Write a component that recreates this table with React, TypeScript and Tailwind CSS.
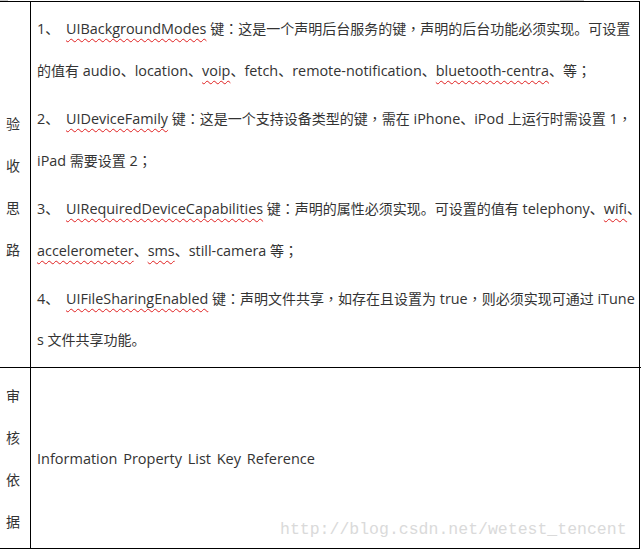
import React from "react";

const CJK = /([\u3000-\u303f\u3400-\u9fff\uff00-\uffef]+)/;

function T({ s }: { s: string }) {
  const parts = s.split(CJK).filter((p) => p.length > 0);
  return (
    <>
      {parts.map((p, i) => {
        if (CJK.test(p)) {
          const sub = p.split(/([：，；])/).filter((q) => q.length > 0);
          return (
            <span key={i} className="text-[14px]">
              {sub.map((q, j) =>
                /^[：，；]$/.test(q) ? (
                  <span key={j} style={{ fontFamily: '"Noto Sans CJK TC", sans-serif' }}>
                    {q}
                  </span>
                ) : (
                  <React.Fragment key={j}>{q}</React.Fragment>
                )
              )}
            </span>
          );
        }
        return <React.Fragment key={i}>{p}</React.Fragment>;
      })}
    </>
  );
}

const W = ({ children }: { children: React.ReactNode }) => (
  <span className="underline decoration-wavy decoration-[#e02020] decoration-1 underline-offset-[4px] [text-decoration-skip-ink:none]">
    {children}
  </span>
);

const Num = ({ n }: { n: string }) => (
  <span className="inline-block w-[29px]">
    {n}
    <span className="text-[14px]">、</span>
  </span>
);

const L = ({ children }: { children: React.ReactNode }) => (
  <div className="h-[42px] leading-[42px]">{children}</div>
);

export default function App() {
  const font = { fontFamily: '"Open Sans", "Noto Sans CJK SC", sans-serif' };
  return (
    <div className="w-[641px] h-[550px] bg-white relative overflow-hidden text-[#333]" style={font}>
      <div className="flex h-px">
        <div className="w-[8px] bg-[#c8c8c8]" />
        <div className="ml-[552px] w-[24px] bg-[#c8c8c8]" />
      </div>
      <div className="w-[640px] border-t border-r border-b border-black grid grid-cols-[31px_1fr] grid-rows-[366px_180px]">
        <div className="border-r border-b border-black flex flex-col items-center justify-center text-[14px] leading-[42px] pt-[4px] pr-[4px]">
          <span>验</span>
          <span>收</span>
          <span>思</span>
          <span>路</span>
        </div>
        <div className="border-b border-black pl-[6px] pt-[5px] text-[14.4px] whitespace-nowrap flex flex-col gap-[6px]">
          <div>
            <L>
              <Num n="1" />
              <W>UIBackgroundModes</W> <T s="键：这是一个声明后台服务的键，声明的后台功能必须实现。可设置" />
            </L>
            <L>
              <T s="的值有 audio、location、" />
              <W>voip</W>
              <T s="、fetch、remote-notification、" />
              <W>bluetooth-centra</W>
              <T s="、等；" />
            </L>
          </div>
          <div>
            <L>
              <Num n="2" />
              <W>UIDeviceFamily</W> <T s="键：这是一个支持设备类型的键，需在 iPhone、iPod 上运行时需设置 1，" />
            </L>
            <L>
              <T s="iPad 需要设置 2；" />
            </L>
          </div>
          <div>
            <L>
              <Num n="3" />
              <W>UIRequiredDeviceCapabilities</W> <T s="键：声明的属性必须实现。可设置的值有 telephony、" />
              <W>wifi</W>
              <T s="、" />
            </L>
            <L>
              <W>accelerometer</W>
              <T s="、" />
              <W>sms</W>
              <T s="、still-camera 等；" />
            </L>
          </div>
          <div>
            <L>
              <Num n="4" />
              <W>UIFileSharingEnabled</W> <T s="键：声明文件共享，如存在且设置为 true，则必须实现可通过 iTune" />
            </L>
            <L>
              <T s="s 文件共享功能。" />
            </L>
          </div>
        </div>
        <div className="border-r border-black flex flex-col items-center justify-center text-[14px] leading-[42px] pr-[4px] pt-[2px]">
          <span>审</span>
          <span>核</span>
          <span>依</span>
          <span>据</span>
        </div>
        <div className="flex items-center pl-[6px] text-[14.5px] [word-spacing:2px] pt-[2px]">
          Information Property List Key Reference
        </div>
      </div>
      <div
        className="absolute left-[280px] top-[517px] text-[16.5px] leading-[26px] text-[#dadada] whitespace-nowrap"
        style={{ fontFamily: '"Liberation Mono", monospace' }}
      >
        http://blog.csdn.net/wetest_tencent
      </div>
    </div>
  );
}
